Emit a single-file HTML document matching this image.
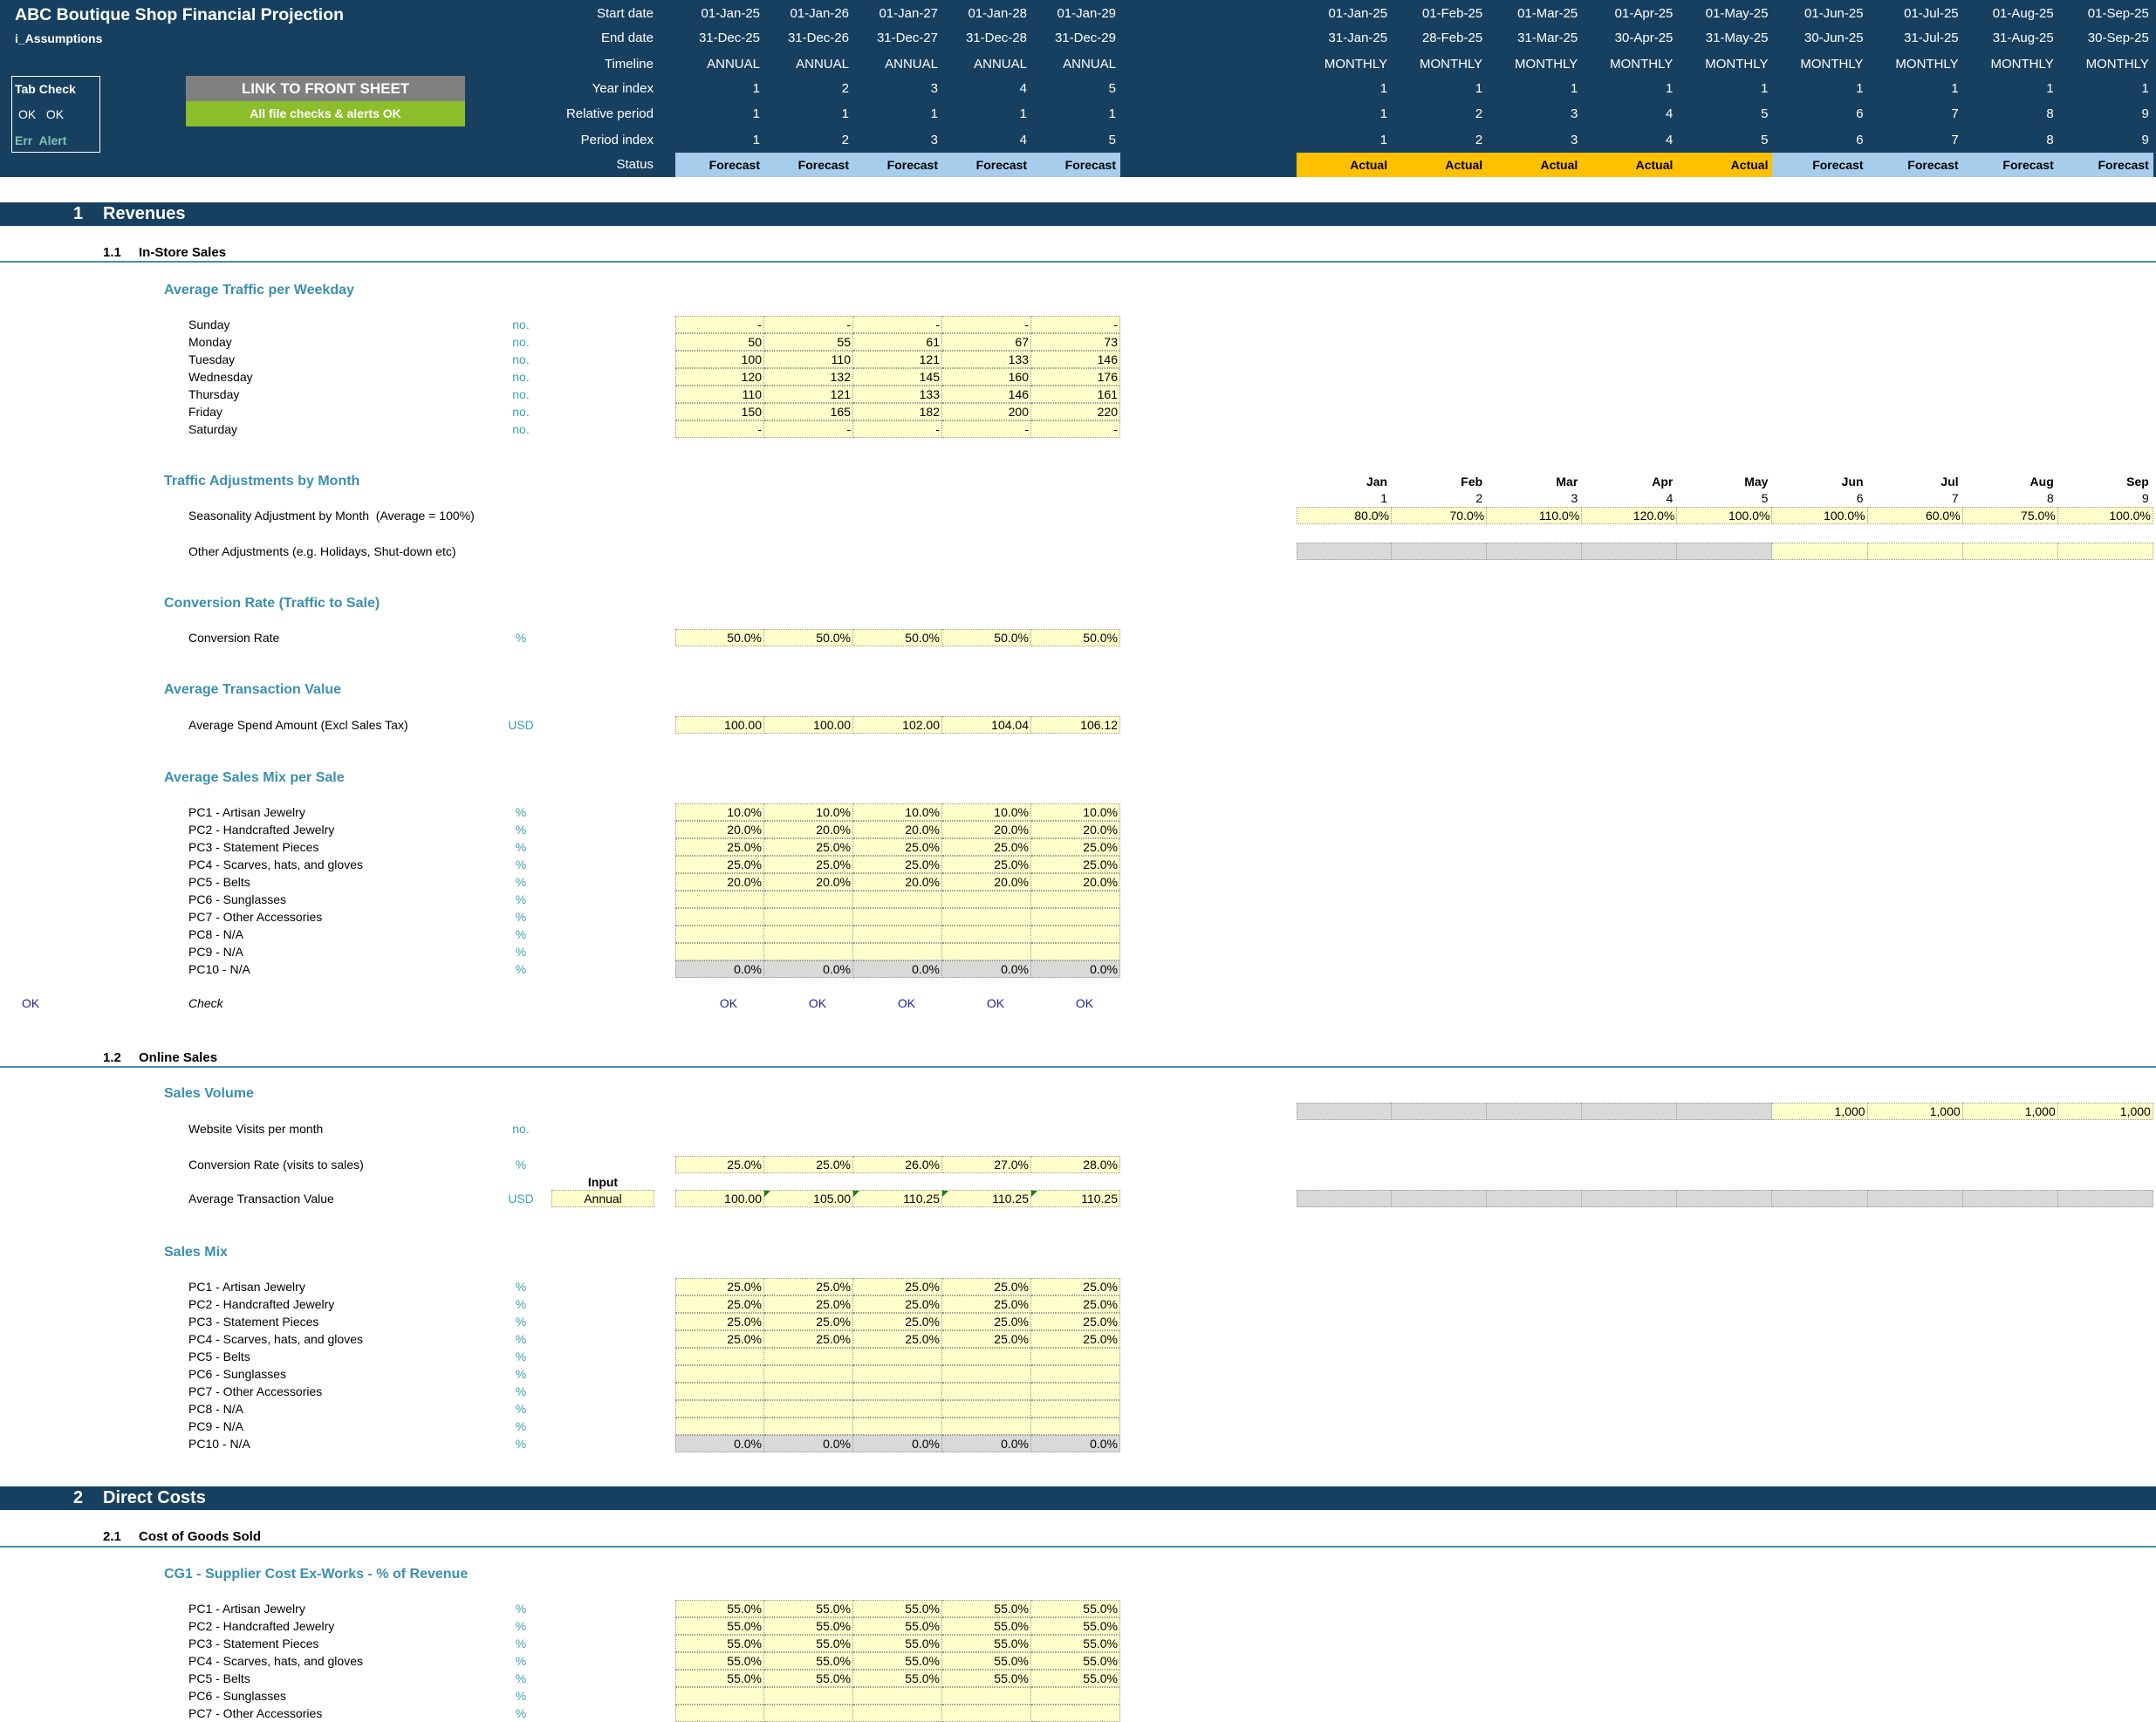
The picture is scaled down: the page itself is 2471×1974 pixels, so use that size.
<!DOCTYPE html>
<html><head><meta charset="utf-8">
<style>
*{margin:0;padding:0;box-sizing:border-box}
body{width:2471px;height:1974px;position:relative;background:#fff;font-family:"Liberation Sans",Arial,sans-serif;font-size:14px;color:#000;overflow:hidden}
.a{position:absolute;white-space:nowrap;line-height:20px;height:20px}
.hd{position:absolute;left:0;top:0;width:2471px;height:203px;background:#174060}
.hl{position:absolute;right:1722px;color:#fff;font-size:15px;line-height:20px;text-align:right}
.hr{position:absolute;display:flex;height:20px;line-height:20px;color:#fff;font-size:15px}
.hr div{text-align:right;padding-right:5px}
.an{left:774px;width:510px}.an div{width:102px}
.mo{left:1486px;width:982px}.mo div{width:109.1px}
.bar{position:absolute;left:0;width:2471px;background:#174060;color:#fff;font-weight:bold;font-size:20px;height:27px;line-height:27px}
.sub{position:absolute;font-weight:bold;font-size:15px;line-height:20px}
.ln{position:absolute;left:0;width:2471px;height:2px;background:#4d8aa0}
.sec{position:absolute;left:188px;font-weight:bold;font-size:16px;color:#3a8fae;line-height:20px}
.lb{position:absolute;left:216px;line-height:20px;font-size:14px}
.un{position:absolute;left:560px;width:74px;text-align:center;color:#3aa0b0;line-height:20px}
.g{position:absolute;display:flex;height:20px;line-height:19px;font-size:14px}
.g div{background:#ffffcc;border:1px dotted #999;border-left:none;text-align:right;padding-right:2px;position:relative}
.g div:first-child{border-left:1px dotted #999}
.g .gr{background:#d9d9d9}
.g .tri::before{content:"";position:absolute;left:0;top:0;border-top:7px solid #1a7a1a;border-right:7px solid transparent}
.ok{position:absolute;display:flex;left:774px;width:510px;color:#22229a;line-height:20px}
.ok div{width:102px;text-align:center;padding-left:20px}
</style></head><body>
<div class="hd"></div>
<div class="a" style="left:17px;top:5px;color:#fff;font-weight:bold;font-size:19.5px;line-height:24px;height:24px">ABC Boutique Shop Financial Projection</div>
<div class="a" style="left:17px;top:34px;color:#fff;font-weight:bold;font-size:14px">i_Assumptions</div>
<div style="position:absolute;left:13px;top:87px;width:102px;height:88px;border:1px solid #fff"></div>
<div class="a" style="left:17px;top:92px;color:#fff;font-weight:bold">Tab Check</div>
<div class="a" style="left:21px;top:121px;color:#fff">OK&nbsp;&nbsp; OK</div>
<div class="a" style="left:17px;top:151px;color:#7fc4b0;font-weight:bold">Err&nbsp; Alert</div>
<div style="position:absolute;left:213px;top:87px;width:320px;height:29px;background:#808080;color:#fff;font-weight:bold;font-size:17px;line-height:29px;text-align:center">LINK TO FRONT SHEET</div>
<div style="position:absolute;left:213px;top:116px;width:320px;height:29px;background:#8cbd2a;color:#fff;font-weight:bold;font-size:14px;line-height:29px;text-align:center">All file checks &amp; alerts OK</div>

<div class="hl" style="top:6px">Start date</div>
<div class="hl" style="top:34px">End date</div>
<div class="hl" style="top:64px">Timeline</div>
<div class="hl" style="top:92px">Year index</div>
<div class="hl" style="top:121px">Relative period</div>
<div class="hl" style="top:151px">Period index</div>
<div class="hl" style="top:179px">Status</div>

<div class="hr an" style="top:6px"><div>01-Jan-25</div><div>01-Jan-26</div><div>01-Jan-27</div><div>01-Jan-28</div><div>01-Jan-29</div></div>
<div class="hr an" style="top:34px"><div>31-Dec-25</div><div>31-Dec-26</div><div>31-Dec-27</div><div>31-Dec-28</div><div>31-Dec-29</div></div>
<div class="hr an" style="top:64px"><div>ANNUAL</div><div>ANNUAL</div><div>ANNUAL</div><div>ANNUAL</div><div>ANNUAL</div></div>
<div class="hr an" style="top:92px"><div>1</div><div>2</div><div>3</div><div>4</div><div>5</div></div>
<div class="hr an" style="top:121px"><div>1</div><div>1</div><div>1</div><div>1</div><div>1</div></div>
<div class="hr an" style="top:151px"><div>1</div><div>2</div><div>3</div><div>4</div><div>5</div></div>
<div class="hr an" style="top:175px;height:28px;line-height:28px;background:#a7cdec;color:#000;font-weight:bold;font-size:14px"><div>Forecast</div><div>Forecast</div><div>Forecast</div><div>Forecast</div><div>Forecast</div></div>

<div class="hr mo" style="top:6px"><div>01-Jan-25</div><div>01-Feb-25</div><div>01-Mar-25</div><div>01-Apr-25</div><div>01-May-25</div><div>01-Jun-25</div><div>01-Jul-25</div><div>01-Aug-25</div><div>01-Sep-25</div></div>
<div class="hr mo" style="top:34px"><div>31-Jan-25</div><div>28-Feb-25</div><div>31-Mar-25</div><div>30-Apr-25</div><div>31-May-25</div><div>30-Jun-25</div><div>31-Jul-25</div><div>31-Aug-25</div><div>30-Sep-25</div></div>
<div class="hr mo" style="top:64px"><div>MONTHLY</div><div>MONTHLY</div><div>MONTHLY</div><div>MONTHLY</div><div>MONTHLY</div><div>MONTHLY</div><div>MONTHLY</div><div>MONTHLY</div><div>MONTHLY</div></div>
<div class="hr mo" style="top:92px"><div>1</div><div>1</div><div>1</div><div>1</div><div>1</div><div>1</div><div>1</div><div>1</div><div>1</div></div>
<div class="hr mo" style="top:121px"><div>1</div><div>2</div><div>3</div><div>4</div><div>5</div><div>6</div><div>7</div><div>8</div><div>9</div></div>
<div class="hr mo" style="top:151px"><div>1</div><div>2</div><div>3</div><div>4</div><div>5</div><div>6</div><div>7</div><div>8</div><div>9</div></div>
<div class="hr mo" style="top:175px;height:28px;line-height:28px;color:#000;font-weight:bold;font-size:14px"><div style="background:#ffc000">Actual</div><div style="background:#ffc000">Actual</div><div style="background:#ffc000">Actual</div><div style="background:#ffc000">Actual</div><div style="background:#ffc000">Actual</div><div style="background:#a7cdec">Forecast</div><div style="background:#a7cdec">Forecast</div><div style="background:#a7cdec">Forecast</div><div style="background:#a7cdec">Forecast</div></div>

<div class="bar" style="top:232px"><span style="position:absolute;left:84px">1</span><span style="position:absolute;left:118px">Revenues</span></div>
<div class="sub" style="top:280px;left:118px">1.1</div><div class="sub" style="top:280px;left:159px">In-Store Sales</div>
<div class="ln" style="top:299px"></div>
<div class="sec" style="top:323px">Average Traffic per Weekday</div>

<div class="lb" style="top:362px">Sunday</div><div class="un" style="top:362px">no.</div>
<div class="lb" style="top:382px">Monday</div><div class="un" style="top:382px">no.</div>
<div class="lb" style="top:402px">Tuesday</div><div class="un" style="top:402px">no.</div>
<div class="lb" style="top:422px">Wednesday</div><div class="un" style="top:422px">no.</div>
<div class="lb" style="top:442px">Thursday</div><div class="un" style="top:442px">no.</div>
<div class="lb" style="top:462px">Friday</div><div class="un" style="top:462px">no.</div>
<div class="lb" style="top:482px">Saturday</div><div class="un" style="top:482px">no.</div>
<div class="g an" style="top:362px"><div>-</div><div>-</div><div>-</div><div>-</div><div>-</div></div>
<div class="g an" style="top:382px"><div>50</div><div>55</div><div>61</div><div>67</div><div>73</div></div>
<div class="g an" style="top:402px"><div>100</div><div>110</div><div>121</div><div>133</div><div>146</div></div>
<div class="g an" style="top:422px"><div>120</div><div>132</div><div>145</div><div>160</div><div>176</div></div>
<div class="g an" style="top:442px"><div>110</div><div>121</div><div>133</div><div>146</div><div>161</div></div>
<div class="g an" style="top:462px"><div>150</div><div>165</div><div>182</div><div>200</div><div>220</div></div>
<div class="g an" style="top:482px"><div>-</div><div>-</div><div>-</div><div>-</div><div>-</div></div>

<div class="sec" style="top:542px">Traffic Adjustments by Month</div>
<div class="hr mo" style="top:542px;color:#000;font-weight:bold;font-size:14px"><div>Jan</div><div>Feb</div><div>Mar</div><div>Apr</div><div>May</div><div>Jun</div><div>Jul</div><div>Aug</div><div>Sep</div></div>
<div class="hr mo" style="top:561px;color:#000;font-size:14px"><div>1</div><div>2</div><div>3</div><div>4</div><div>5</div><div>6</div><div>7</div><div>8</div><div>9</div></div>
<div class="lb" style="top:581px">Seasonality Adjustment by Month&nbsp; (Average = 100%)</div>
<div class="g mo" style="top:581px"><div>80.0%</div><div>70.0%</div><div>110.0%</div><div>120.0%</div><div>100.0%</div><div>100.0%</div><div>60.0%</div><div>75.0%</div><div>100.0%</div></div>
<div class="lb" style="top:622px">Other Adjustments (e.g. Holidays, Shut-down etc)</div>
<div class="g mo" style="top:622px"><div class="gr"></div><div class="gr"></div><div class="gr"></div><div class="gr"></div><div class="gr"></div><div></div><div></div><div></div><div></div></div>

<div class="sec" style="top:682px">Conversion Rate (Traffic to Sale)</div>
<div class="lb" style="top:721px">Conversion Rate</div><div class="un" style="top:721px">%</div>
<div class="g an" style="top:721px"><div>50.0%</div><div>50.0%</div><div>50.0%</div><div>50.0%</div><div>50.0%</div></div>

<div class="sec" style="top:781px">Average Transaction Value</div>
<div class="lb" style="top:821px">Average Spend Amount (Excl Sales Tax)</div><div class="un" style="top:821px">USD</div>
<div class="g an" style="top:821px"><div>100.00</div><div>100.00</div><div>102.00</div><div>104.04</div><div>106.12</div></div>

<div class="sec" style="top:882px">Average Sales Mix per Sale</div>
<div class="lb" style="top:921px">PC1 - Artisan Jewelry</div><div class="un" style="top:921px">%</div>
<div class="lb" style="top:941px">PC2 - Handcrafted Jewelry</div><div class="un" style="top:941px">%</div>
<div class="lb" style="top:961px">PC3 - Statement Pieces</div><div class="un" style="top:961px">%</div>
<div class="lb" style="top:981px">PC4 - Scarves, hats, and gloves</div><div class="un" style="top:981px">%</div>
<div class="lb" style="top:1001px">PC5 - Belts</div><div class="un" style="top:1001px">%</div>
<div class="lb" style="top:1021px">PC6 - Sunglasses</div><div class="un" style="top:1021px">%</div>
<div class="lb" style="top:1041px">PC7 - Other Accessories</div><div class="un" style="top:1041px">%</div>
<div class="lb" style="top:1061px">PC8 - N/A</div><div class="un" style="top:1061px">%</div>
<div class="lb" style="top:1081px">PC9 - N/A</div><div class="un" style="top:1081px">%</div>
<div class="lb" style="top:1101px">PC10 - N/A</div><div class="un" style="top:1101px">%</div>
<div class="g an" style="top:921px"><div>10.0%</div><div>10.0%</div><div>10.0%</div><div>10.0%</div><div>10.0%</div></div>
<div class="g an" style="top:941px"><div>20.0%</div><div>20.0%</div><div>20.0%</div><div>20.0%</div><div>20.0%</div></div>
<div class="g an" style="top:961px"><div>25.0%</div><div>25.0%</div><div>25.0%</div><div>25.0%</div><div>25.0%</div></div>
<div class="g an" style="top:981px"><div>25.0%</div><div>25.0%</div><div>25.0%</div><div>25.0%</div><div>25.0%</div></div>
<div class="g an" style="top:1001px"><div>20.0%</div><div>20.0%</div><div>20.0%</div><div>20.0%</div><div>20.0%</div></div>
<div class="g an" style="top:1021px"><div></div><div></div><div></div><div></div><div></div></div>
<div class="g an" style="top:1041px"><div></div><div></div><div></div><div></div><div></div></div>
<div class="g an" style="top:1061px"><div></div><div></div><div></div><div></div><div></div></div>
<div class="g an" style="top:1081px"><div></div><div></div><div></div><div></div><div></div></div>
<div class="g an" style="top:1101px"><div class="gr">0.0%</div><div class="gr">0.0%</div><div class="gr">0.0%</div><div class="gr">0.0%</div><div class="gr">0.0%</div></div>

<div class="a" style="left:25px;top:1140px;color:#22229a">OK</div>
<div class="lb" style="top:1140px;font-style:italic">Check</div>
<div class="ok" style="top:1140px"><div>OK</div><div>OK</div><div>OK</div><div>OK</div><div>OK</div></div>

<div class="sub" style="top:1203px;left:118px">1.2</div><div class="sub" style="top:1203px;left:159px">Online Sales</div>
<div class="ln" style="top:1222px"></div>
<div class="sec" style="top:1244px">Sales Volume</div>
<div class="g mo" style="top:1264px"><div class="gr"></div><div class="gr"></div><div class="gr"></div><div class="gr"></div><div class="gr"></div><div>1,000</div><div>1,000</div><div>1,000</div><div>1,000</div></div>
<div class="lb" style="top:1284px">Website Visits per month</div><div class="un" style="top:1284px">no.</div>
<div class="lb" style="top:1325px">Conversion Rate (visits to sales)</div><div class="un" style="top:1325px">%</div>
<div class="g an" style="top:1325px"><div>25.0%</div><div>25.0%</div><div>26.0%</div><div>27.0%</div><div>28.0%</div></div>
<div class="a" style="left:632px;width:118px;top:1345px;text-align:center;font-weight:bold">Input</div>
<div class="lb" style="top:1364px">Average Transaction Value</div><div class="un" style="top:1364px">USD</div>
<div class="g" style="left:632px;width:118px;top:1364px"><div style="width:118px;text-align:center;padding:0">Annual</div></div>
<div class="g an" style="top:1364px"><div>100.00</div><div class="tri">105.00</div><div class="tri">110.25</div><div class="tri">110.25</div><div class="tri">110.25</div></div>
<div class="g mo" style="top:1364px"><div class="gr"></div><div class="gr"></div><div class="gr"></div><div class="gr"></div><div class="gr"></div><div class="gr"></div><div class="gr"></div><div class="gr"></div><div class="gr"></div></div>

<div class="sec" style="top:1426px">Sales Mix</div>
<div class="lb" style="top:1465px">PC1 - Artisan Jewelry</div><div class="un" style="top:1465px">%</div>
<div class="lb" style="top:1485px">PC2 - Handcrafted Jewelry</div><div class="un" style="top:1485px">%</div>
<div class="lb" style="top:1505px">PC3 - Statement Pieces</div><div class="un" style="top:1505px">%</div>
<div class="lb" style="top:1525px">PC4 - Scarves, hats, and gloves</div><div class="un" style="top:1525px">%</div>
<div class="lb" style="top:1545px">PC5 - Belts</div><div class="un" style="top:1545px">%</div>
<div class="lb" style="top:1565px">PC6 - Sunglasses</div><div class="un" style="top:1565px">%</div>
<div class="lb" style="top:1585px">PC7 - Other Accessories</div><div class="un" style="top:1585px">%</div>
<div class="lb" style="top:1605px">PC8 - N/A</div><div class="un" style="top:1605px">%</div>
<div class="lb" style="top:1625px">PC9 - N/A</div><div class="un" style="top:1625px">%</div>
<div class="lb" style="top:1645px">PC10 - N/A</div><div class="un" style="top:1645px">%</div>
<div class="g an" style="top:1465px"><div>25.0%</div><div>25.0%</div><div>25.0%</div><div>25.0%</div><div>25.0%</div></div>
<div class="g an" style="top:1485px"><div>25.0%</div><div>25.0%</div><div>25.0%</div><div>25.0%</div><div>25.0%</div></div>
<div class="g an" style="top:1505px"><div>25.0%</div><div>25.0%</div><div>25.0%</div><div>25.0%</div><div>25.0%</div></div>
<div class="g an" style="top:1525px"><div>25.0%</div><div>25.0%</div><div>25.0%</div><div>25.0%</div><div>25.0%</div></div>
<div class="g an" style="top:1545px"><div></div><div></div><div></div><div></div><div></div></div>
<div class="g an" style="top:1565px"><div></div><div></div><div></div><div></div><div></div></div>
<div class="g an" style="top:1585px"><div></div><div></div><div></div><div></div><div></div></div>
<div class="g an" style="top:1605px"><div></div><div></div><div></div><div></div><div></div></div>
<div class="g an" style="top:1625px"><div></div><div></div><div></div><div></div><div></div></div>
<div class="g an" style="top:1645px"><div class="gr">0.0%</div><div class="gr">0.0%</div><div class="gr">0.0%</div><div class="gr">0.0%</div><div class="gr">0.0%</div></div>

<div class="bar" style="top:1704px"><span style="position:absolute;left:84px">2</span><span style="position:absolute;left:118px">Direct Costs</span></div>
<div class="sub" style="top:1752px;left:118px">2.1</div><div class="sub" style="top:1752px;left:159px">Cost of Goods Sold</div>
<div class="ln" style="top:1772px"></div>
<div class="sec" style="top:1795px">CG1 - Supplier Cost Ex-Works - % of Revenue</div>
<div class="lb" style="top:1834px">PC1 - Artisan Jewelry</div><div class="un" style="top:1834px">%</div>
<div class="lb" style="top:1854px">PC2 - Handcrafted Jewelry</div><div class="un" style="top:1854px">%</div>
<div class="lb" style="top:1874px">PC3 - Statement Pieces</div><div class="un" style="top:1874px">%</div>
<div class="lb" style="top:1894px">PC4 - Scarves, hats, and gloves</div><div class="un" style="top:1894px">%</div>
<div class="lb" style="top:1914px">PC5 - Belts</div><div class="un" style="top:1914px">%</div>
<div class="lb" style="top:1934px">PC6 - Sunglasses</div><div class="un" style="top:1934px">%</div>
<div class="lb" style="top:1954px">PC7 - Other Accessories</div><div class="un" style="top:1954px">%</div>
<div class="g an" style="top:1834px"><div>55.0%</div><div>55.0%</div><div>55.0%</div><div>55.0%</div><div>55.0%</div></div>
<div class="g an" style="top:1854px"><div>55.0%</div><div>55.0%</div><div>55.0%</div><div>55.0%</div><div>55.0%</div></div>
<div class="g an" style="top:1874px"><div>55.0%</div><div>55.0%</div><div>55.0%</div><div>55.0%</div><div>55.0%</div></div>
<div class="g an" style="top:1894px"><div>55.0%</div><div>55.0%</div><div>55.0%</div><div>55.0%</div><div>55.0%</div></div>
<div class="g an" style="top:1914px"><div>55.0%</div><div>55.0%</div><div>55.0%</div><div>55.0%</div><div>55.0%</div></div>
<div class="g an" style="top:1934px"><div></div><div></div><div></div><div></div><div></div></div>
<div class="g an" style="top:1954px"><div></div><div></div><div></div><div></div><div></div></div>
</body></html>
